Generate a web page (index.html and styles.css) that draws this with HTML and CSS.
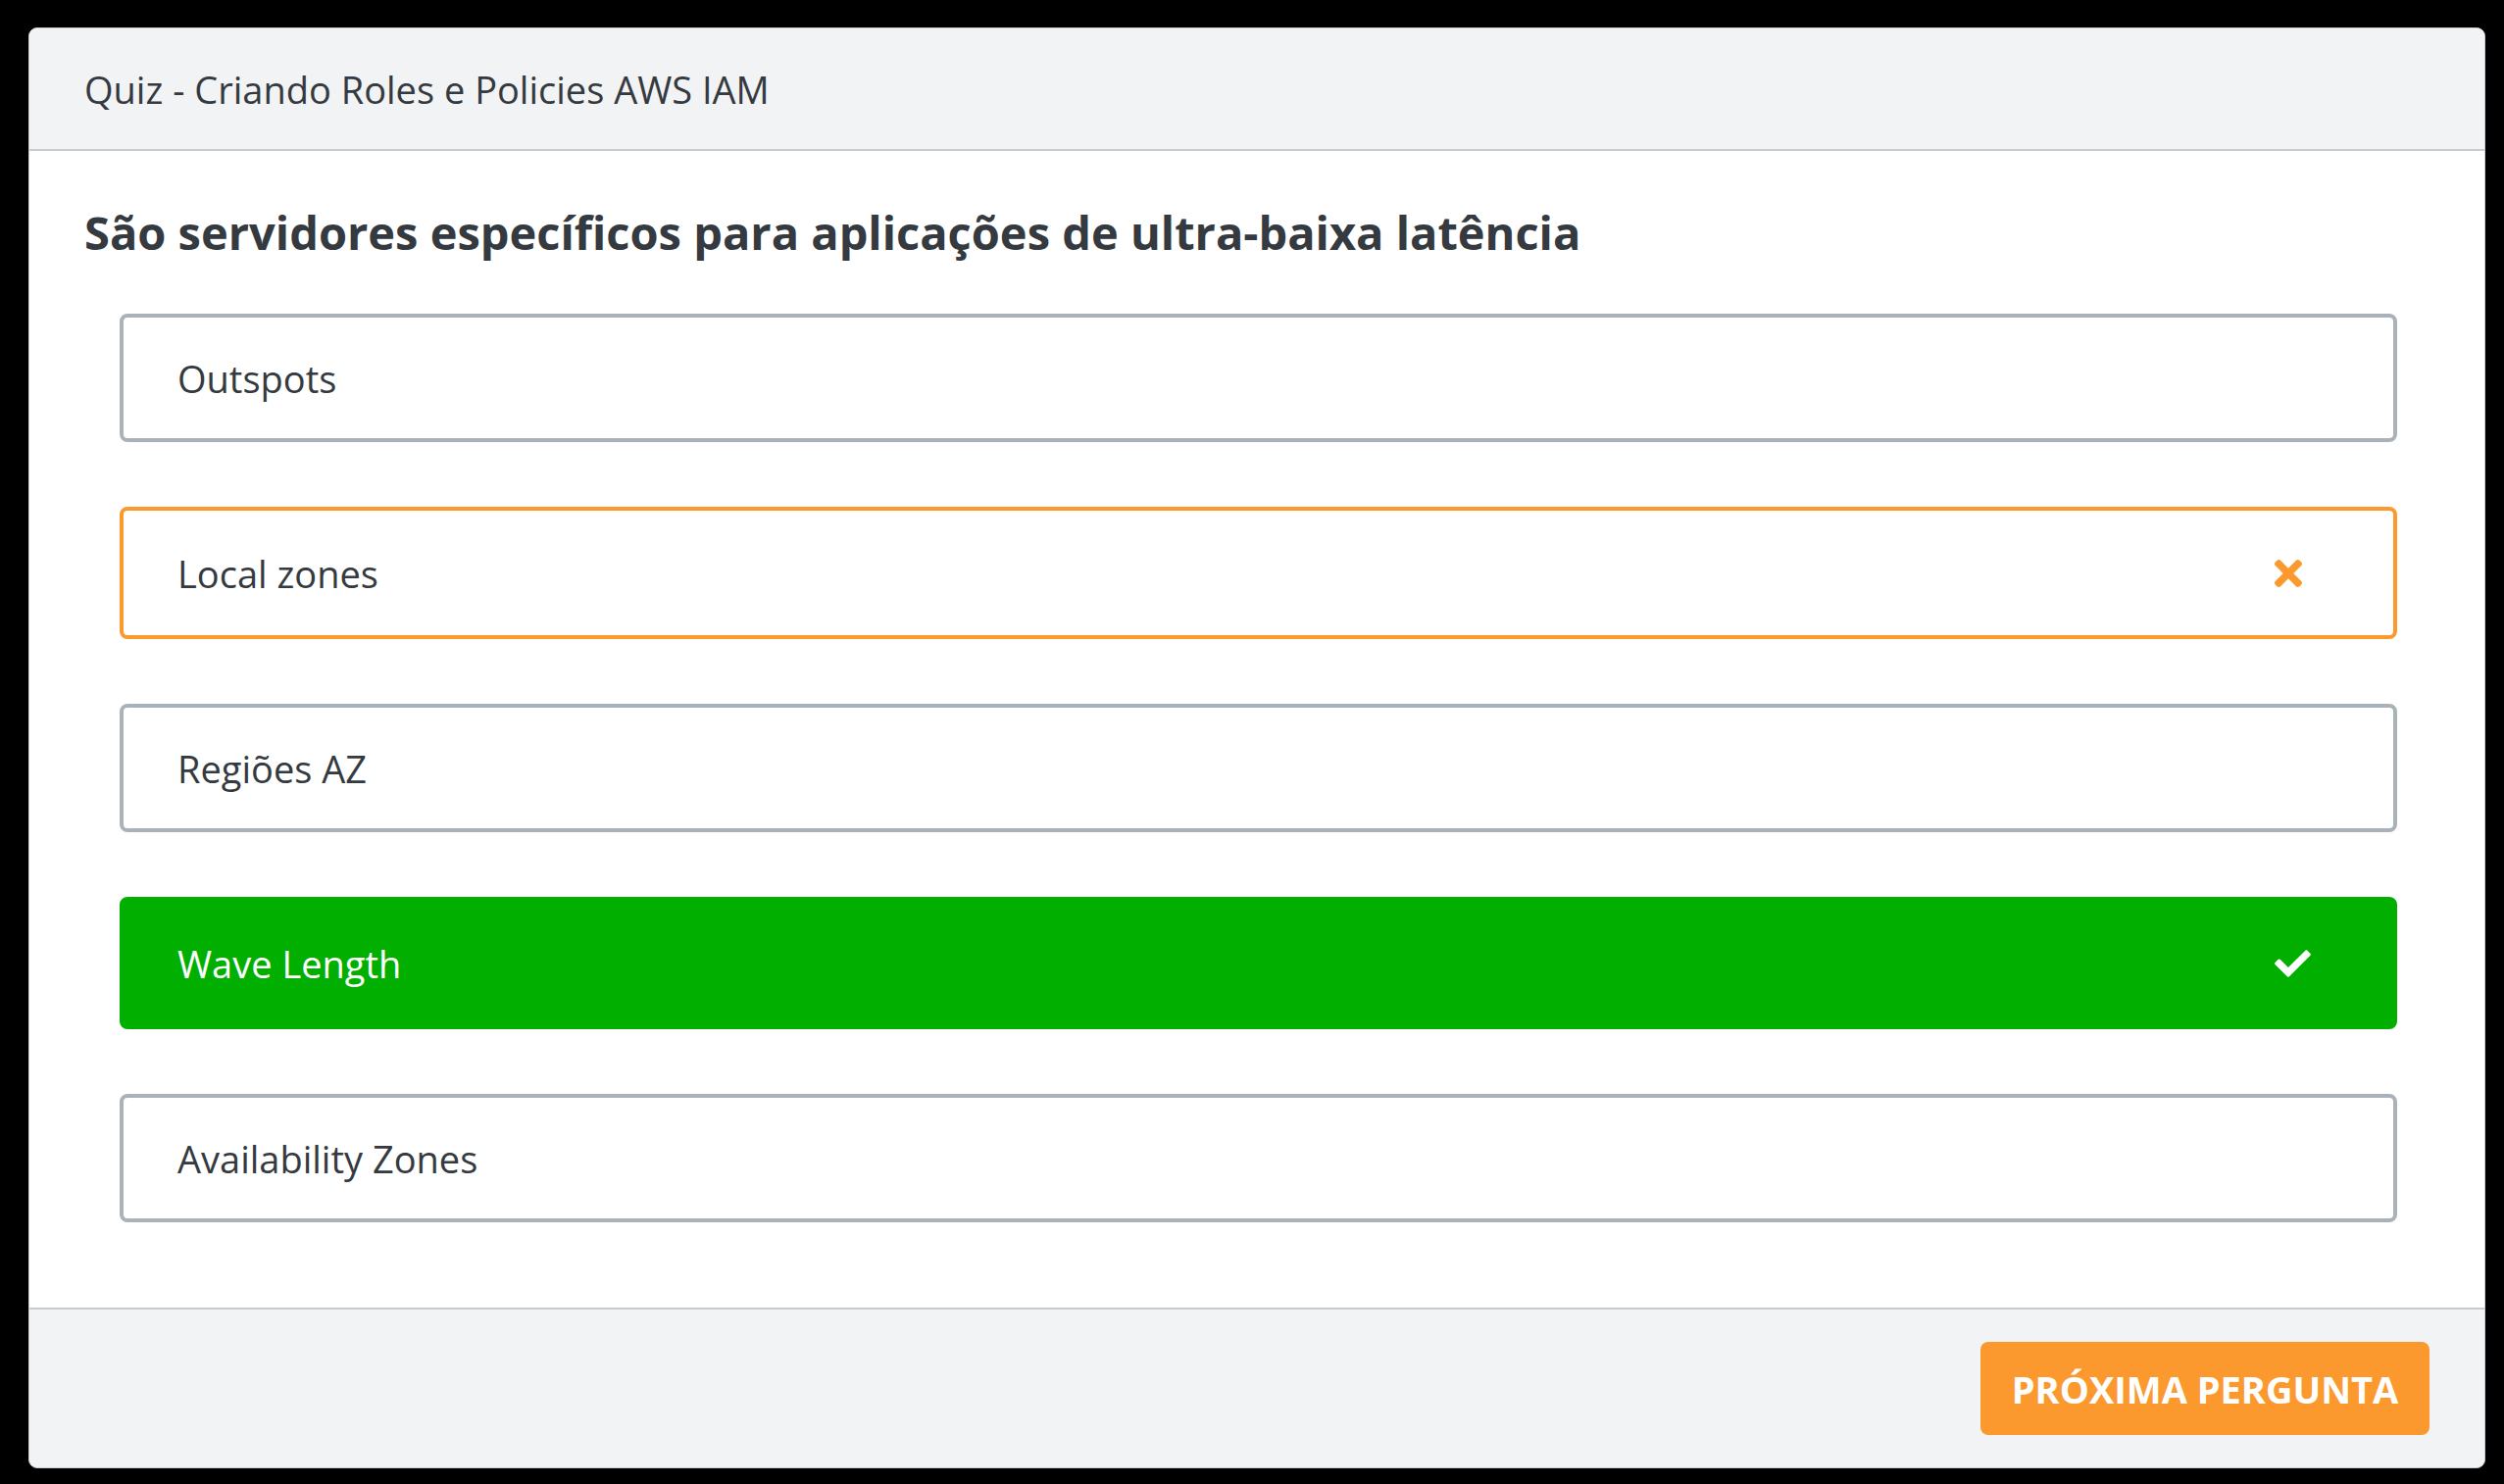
FILE: index.html
```html
<!DOCTYPE html>
<html lang="pt-BR">
<head>
<meta charset="utf-8">
<title>Quiz</title>
<link rel="stylesheet" href="styles.css">
</head>
<body>
<div class="card">
  <div class="card-header">Quiz - Criando Roles e Policies AWS IAM</div>
  <div class="card-body">
    <h2 class="question">São servidores específicos para aplicações de ultra-baixa latência</h2>
    <div class="options">
      <div class="option">Outspots</div>
      <div class="option wrong">Local zones
        <svg class="icon icon-x" viewBox="0 80 352 352"><path d="M242.72 256l100.07-100.07c12.28-12.28 12.28-32.19 0-44.48l-22.240-22.240c-12.28-12.28-32.19-12.28-44.48 0L176 189.28 75.93 89.21c-12.28-12.28-32.19-12.28-44.48 0L9.21 111.45c-12.28 12.28-12.28 32.19 0 44.48L109.28 256 9.21 356.07c-12.28 12.280-12.28 32.19 0 44.48l22.24 22.24c12.28 12.28 32.2 12.28 44.48 0L176 322.72l100.07 100.07c12.28 12.28 32.2 12.28 44.48 0l22.24-22.24c12.28-12.28 12.28-32.19 0-44.48L242.72 256z"/></svg>
      </div>
      <div class="option">Regiões AZ</div>
      <div class="option right">Wave Length
        <svg class="icon icon-check" viewBox="0 60 512 392"><path d="M173.898 439.404l-166.4-166.4c-9.997-9.997-9.997-26.206 0-36.204l36.203-36.204c9.997-9.998 26.207-9.998 36.204 0L192 312.69 432.095 72.596c9.997-9.997 26.207-9.997 36.204 0l36.203 36.204c9.997 9.997 9.997 26.206 0 36.204l-294.4 294.401c-9.998 9.997-26.207 9.997-36.204-.001z"/></svg>
      </div>
      <div class="option">Availability Zones</div>
    </div>
  </div>
  <div class="card-footer">
    <button class="btn-next">PRÓXIMA PERGUNTA</button>
  </div>
</div>
</body>
</html>
```
FILE: styles.css
```css
html, body {
  margin: 0;
  padding: 0;
  background: #000;
}
body {
  padding: 28px 19px 16px 29px;
  font-family: "Open Sans", "Liberation Sans", sans-serif;
  color: #343a40;
}
.card {
  height: 1470px;
  box-sizing: border-box;
  background: #fff;
  border: 1px solid #c8ccd1;
  border-radius: 9px;
  display: flex;
  flex-direction: column;
  overflow: hidden;
}
.card-header {
  height: 125px;
  box-sizing: border-box;
  background: #f2f3f5;
  border-bottom: 2px solid #c8ccd1;
  padding-left: 56px;
  display: flex;
  align-items: center;
  font-size: 38px;
  color: #343a40;
}
.card-body {
  flex: 1;
  padding: 0 56px;
}
.question {
  margin: 54px 0 54px;
  font-size: 47px;
  line-height: 58px;
  font-weight: 700;
  color: #343a40;
}
.options {
  padding: 0 33px 0 36px;
  display: flex;
  flex-direction: column;
  gap: 66px;
}
.option {
  height: 131px;
  box-sizing: border-box;
  border: 4px solid #aab2b9;
  border-radius: 8px;
  padding: 0 55px;
  display: flex;
  align-items: center;
  justify-content: space-between;
  font-size: 38px;
  color: #343a40;
}
.option.wrong {
  height: 135px;
  border-color: #fb992e;
}
.option.right {
  height: 135px;
  border-color: #00af00;
  background: #00af00;
  color: #fff;
}
.icon-x {
  fill: #fb992e;
  width: 28px;
  height: 28px;
  margin-right: 38px;
}
.icon-check {
  fill: #fff;
  width: 37px;
  height: 28px;
  margin-right: 29px;
}
.card-footer {
  height: 163px;
  box-sizing: border-box;
  background: #f2f3f5;
  border-top: 2px solid #c8ccd1;
  display: flex;
  align-items: flex-start;
  justify-content: flex-end;
  padding: 33px 56px 0 0;
}
.btn-next {
  width: 458px;
  height: 95px;
  border: none;
  border-radius: 8px;
  background: #fb992e;
  color: #fff;
  font-family: "Open Sans", "Liberation Sans", sans-serif;
  font-size: 38px;
  font-weight: 700;
  padding: 0;
}
```
